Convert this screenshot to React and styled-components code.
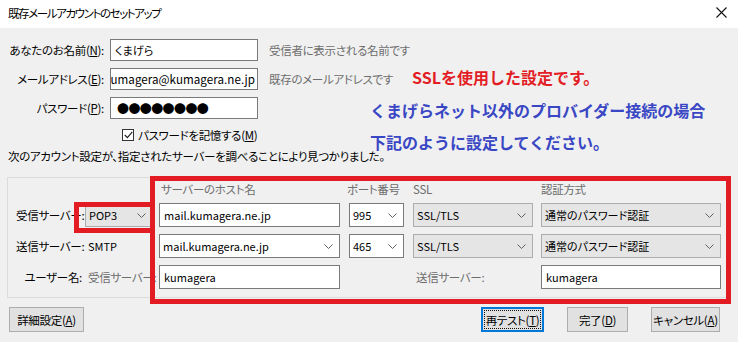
import React from 'react';
import styled, { createGlobalStyle } from 'styled-components';

const GlobalStyle = createGlobalStyle`
  html, body {
    margin: 0;
    padding: 0;
    background: #f0f0f0;
  }
  body {
    font-family: 'Noto Sans CJK JP', 'Noto Sans', sans-serif;
    font-size: 11.5px;
    letter-spacing: -0.3px;
    font-feature-settings: 'palt';
    color: #000;
  }
`

const Chevron = () => (
  <svg width="9" height="5" viewBox="0 0 9 5">
    <path d="M0.5 0.5 L4.5 4.5 L8.5 0.5" fill="none" stroke="#606060" strokeWidth="1" />
  </svg>
)

const CloseIcon = () => (
  <svg width="11" height="11" viewBox="0 0 11 11">
    <path d="M0.5 0.5 L10.5 10.5 M10.5 0.5 L0.5 10.5" stroke="#111" strokeWidth="1.1" />
  </svg>
)

const CheckIcon = () => (
  <svg width="9" height="8" viewBox="0 0 9 8">
    <path d="M0.8 4 L3.4 6.6 L8.3 0.9" fill="none" stroke="#222" strokeWidth="1.2" />
  </svg>
)

export default function App() {
  return (
    <>
      <GlobalStyle />
      <Window>
        <TitleBar>
          <Title>既存メールアカウントのセットアップ</Title>
          <CloseButton><CloseIcon /></CloseButton>
        </TitleBar>

        <Content>
          <Form>
            <Label>あなたのお名前(<u>N</u>):</Label>
            <Field>くまげら</Field>
            <Hint>受信者に表示される名前です</Hint>

            <Label>メールアドレス(<u>E</u>):</Label>
            <Field $end>kumagera@kumagera.ne.jp</Field>
            <Hint>既存のメールアドレスです</Hint>

            <Label>パスワード(<u>P</u>):</Label>
            <Field><Dots>●●●●●●●●</Dots></Field>
            <span />
          </Form>

          <CheckRow>
            <CheckBox><CheckIcon /></CheckBox>
            <span>パスワードを記憶する(<u>M</u>)</span>
          </CheckRow>

          <Found>次のアカウント設定が、指定されたサーバーを調べることにより見つかりました。</Found>

          <Group>
            <span />
            <span />
            <Head $shift={2}>サーバーのホスト名</Head>
            <Head $shift={-2}>ポート番号</Head>
            <Head>SSL</Head>
            <Head>認証方式</Head>

            <RowLabel>受信サーバー:</RowLabel>
            <Select $grey $width={68}>POP3<Chevron /></Select>
            <Field $width={181} $h={24}>mail.kumagera.ne.jp</Field>
            <Select $width={55}>995<Chevron /></Select>
            <Select $grey $width={120}>SSL/TLS<Chevron /></Select>
            <Select $grey $width={180}>通常のパスワード認証<Chevron /></Select>

            <RowLabel>送信サーバー:</RowLabel>
            <Plain>SMTP</Plain>
            <Select $width={181}>mail.kumagera.ne.jp<Chevron /></Select>
            <Select $width={55}>465<Chevron /></Select>
            <Select $grey $width={120}>SSL/TLS<Chevron /></Select>
            <Select $grey $width={180}>通常のパスワード認証<Chevron /></Select>

            <RowLabel>ユーザー名:</RowLabel>
            <Plain $muted>受信サーバー:</Plain>
            <Field $width={181} $h={24}>kumagera</Field>
            <span />
            <Plain $muted>送信サーバー:</Plain>
            <Field $width={180} $h={24}>kumagera</Field>
          </Group>

          <ButtonBar>
            <Button $width={75} $left>詳細設定(<u>A</u>)</Button>
            <Spacer />
            <Button $width={63} $primary><FocusRing>再テスト(<u>T</u>)</FocusRing></Button>
            <Button $width={61}>完了(<u>D</u>)</Button>
            <Button $width={69}>キャンセル(<u>A</u>)</Button>
          </ButtonBar>
        </Content>

        <Note $top={66} $left={412} $color="#e31d25">SSLを使用した設定です。</Note>
        <Note $top={99} $left={370} $color="#3a47c4">くまげらネット以外のプロバイダー接続の場合</Note>
        <Note $top={131} $left={370} $color="#3a47c4">下記のように設定してください。</Note>

        <RedFrame $left={150} $top={176} $width={581} $height={128} />
        <RedFrame $left={74} $top={202} $width={80} $height={31} $open />
      </Window>
    </>
  )
}

const Window = styled.div`
  position: relative;
  width: 738px;
  height: 342px;
  overflow: hidden;
  background: #f0f0f0;
`

const TitleBar = styled.div`
  height: 28px;
  background: #fff;
  display: flex;
  align-items: center;
  justify-content: space-between;
  padding: 0 9px 0 8px;
  box-sizing: border-box;
`

const Title = styled.div`
  font-size: 11.5px;
  letter-spacing: -1.4px;
  margin-top: -2px;
`

const CloseButton = styled.div`
  width: 16px;
  display: flex;
  justify-content: center;
  margin-top: -3px;
`

const Content = styled.div`
  padding: 11px 7px 0 7px;
`

const Form = styled.div`
  display: grid;
  grid-template-columns: 96px 148px auto;
  grid-auto-rows: 22px;
  column-gap: 6px;
  row-gap: 7px;
  padding-left: 1px;
  align-items: center;
`

const Label = styled.div`
  text-align: right;
  white-space: nowrap;
`

const Hint = styled.div`
  color: #6d6d6d;
  padding-left: 5px;
  white-space: nowrap;
`

const Field = styled.div`
  box-sizing: border-box;
  width: ${p => (p.$width ? `${p.$width}px` : '100%')};
  height: ${p => p.$h || 22}px;
  background: #fff;
  border: 1px solid #7a7a7a;
  display: flex;
  align-items: center;
  justify-content: ${p => (p.$end ? 'flex-end' : 'flex-start')};
  padding: ${p => (p.$end ? '0 2px 0 0' : '0 4px')};
  overflow: hidden;
  white-space: nowrap;
  font-size: ${p => (p.$end ? '11.6px' : '11px')};
  letter-spacing: 0.05px;
`

const Dots = styled.span`
  font-size: 12px;
  letter-spacing: -0.6px;
  margin-left: 2px;
  margin-top: 1px;
`

const CheckRow = styled.div`
  display: flex;
  align-items: center;
  gap: 4px;
  height: 18px;
  margin: 7px 0 0 115px;
`

const CheckBox = styled.div`
  width: 12px;
  height: 12px;
  box-sizing: border-box;
  border: 1px solid #333;
  background: #fff;
  display: flex;
  align-items: center;
  justify-content: center;
`

const Found = styled.div`
  margin: 4px 0 0 1px;
  height: 16px;
  line-height: 16px;
`

const Group = styled.div`
  margin-top: 13px;
  width: 722px;
  box-sizing: border-box;
  border: 1px solid #dcdcdc;
  padding: 4px 0 8px 8px;
  display: grid;
  grid-template-columns: 69px 74px 190px 64px 128px 180px;
  grid-template-rows: 14px 24px 24px 24px;
  row-gap: 7px;
  align-items: center;
`

const Head = styled.div`
  color: #6d6d6d;
  margin-left: ${p => p.$shift || 0}px;
  white-space: nowrap;
  line-height: 14px;
`

const RowLabel = styled.div`
  text-align: right;
  padding-right: 3px;
  white-space: nowrap;
`

const Plain = styled.div`
  color: ${p => (p.$muted ? '#6d6d6d' : '#000')};
  padding-left: 3px;
  white-space: nowrap;
  font-size: ${p => (p.$muted ? '11.5px' : '11px')};
  letter-spacing: ${p => (p.$muted ? '-0.3px' : '0')};
`

const Select = styled.div`
  box-sizing: border-box;
  width: ${p => p.$width}px;
  height: 24px;
  background: ${p => (p.$grey ? '#e5e5e5' : '#fff')};
  border: 1px solid ${p => (p.$grey ? '#adadad' : '#7a7a7a')};
  display: flex;
  align-items: center;
  justify-content: space-between;
  padding: 0 6px 0 3px;
  white-space: nowrap;
  font-size: 11px;
  letter-spacing: 0;
`

const ButtonBar = styled.div`
  display: flex;
  align-items: center;
  gap: 23px;
  margin-top: 9px;
  padding-right: 11px;
`

const Spacer = styled.div`
  flex: 1;
`

const Button = styled.div`
  box-sizing: border-box;
  width: ${p => p.$width}px;
  height: 25px;
  margin-left: ${p => (p.$left ? '2px' : '0')};
  background: #e1e1e1;
  border: 1px solid ${p => (p.$primary ? '#0078d7' : '#adadad')};
  box-shadow: ${p => (p.$primary ? 'inset 0 0 0 1px #0078d7' : 'none')};
  display: flex;
  align-items: center;
  justify-content: center;
  padding: ${p => (p.$primary ? '2px' : '0')};
  white-space: nowrap;
`

const FocusRing = styled.div`
  flex: 1;
  align-self: stretch;
  display: flex;
  align-items: center;
  justify-content: center;
  border: 1px dotted #111;
`

const Note = styled.div`
  position: absolute;
  top: ${p => p.$top}px;
  left: ${p => p.$left}px;
  color: ${p => p.$color};
  font-size: 16px;
  font-weight: 700;
  line-height: 22px;
  letter-spacing: 0;
  font-feature-settings: normal;
  white-space: nowrap;
`

const RedFrame = styled.div`
  position: absolute;
  left: ${p => p.$left}px;
  top: ${p => p.$top}px;
  width: ${p => p.$width}px;
  height: ${p => p.$height}px;
  box-sizing: border-box;
  border: 5px solid #e31b23;
  border-right: ${p => (p.$open ? 'none' : '5px solid #e31b23')};
`
